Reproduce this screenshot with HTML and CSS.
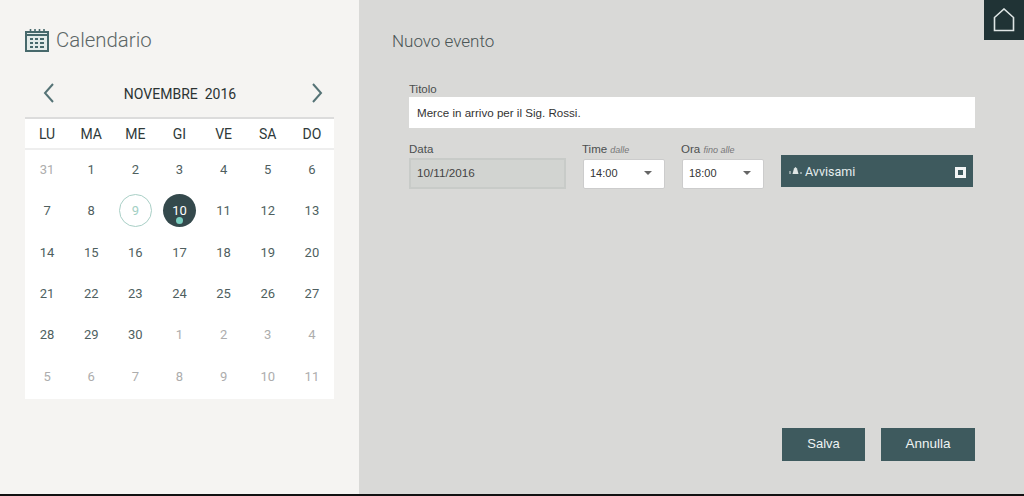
FILE: index.html

```html
<!DOCTYPE html>
<html lang="it">

<head>
    <meta charset="UTF-8">
    <title>Calendario</title>
    <link rel="stylesheet" href="styles.css">
</head>

<body>
    <div class="page">
        <div class="side">
            <div class="side-title">
                <svg class="cal-icon" width="24" height="24" viewBox="0 0 24 24">
                    <path d="M1 4H23V23H1Z" fill="#e4ecea" stroke="#47696c" stroke-width="2" />
                    <path d="M1 7H23" stroke="#47696c" stroke-width="2" />
                    <path d="M5.500 1V5M10 1V5M14.500 1V5M19 1V5" stroke="#47696c" stroke-width="1.600" />
                    <path d="M5 10H8V12H5ZM10 10H13V12H10ZM15 10H19V12H15ZM5 14H8V16H5ZM10 14H13V16H10ZM15 14H19V16H15ZM5 18H8V20H5ZM10 18H13V20H10ZM15 18H19V20H15Z" fill="#47696c" />
                </svg>
                <h1>Calendario</h1>
            </div>

            <div class="month">
                <svg width="12" height="20" viewBox="0 0 12 20">
                    <path d="M10 1L2 10L10 19" fill="none" stroke="#557376" stroke-width="2" />
                </svg>
                <span>NOVEMBRE&nbsp;&nbsp;2016</span>
                <svg width="12" height="20" viewBox="0 0 12 20">
                    <path d="M2 1L10 10L2 19" fill="none" stroke="#557376" stroke-width="2" />
                </svg>
            </div>

            <div class="cal">
                <div class="week">
                    <span>LU</span><span>MA</span><span>ME</span><span>GI</span><span>VE</span><span>SA</span><span>DO</span>
                </div>
                <div class="days">
                    <span class="off">31</span><span>1</span><span>2</span><span>3</span><span>4</span><span>5</span><span>6</span>
                    <span>7</span><span>8</span><span class="ring"><b>9</b></span><span class="now"><b>10</b></span><span>11</span><span>12</span><span>13</span>
                    <span>14</span><span>15</span><span>16</span><span>17</span><span>18</span><span>19</span><span>20</span>
                    <span>21</span><span>22</span><span>23</span><span>24</span><span>25</span><span>26</span><span>27</span>
                    <span>28</span><span>29</span><span>30</span><span class="off">1</span><span class="off">2</span><span class="off">3</span><span class="off">4</span>
                    <span class="off">5</span><span class="off">6</span><span class="off">7</span><span class="off">8</span><span class="off">9</span><span class="off">10</span><span class="off">11</span>
                </div>
            </div>
        </div>

        <div class="main">
            <a class="home">
                <svg width="22" height="24" viewBox="0 0 22 24">
                    <path d="M1.500 9.500L11 1L20.500 9.500V22.500H1.500Z" fill="none" stroke="#dfe6e5" stroke-width="1.600" />
                </svg>
            </a>

            <h2>Nuovo evento</h2>

            <div class="form">
                <label class="lab">Titolo</label>
                <div class="input-title">Merce in arrivo per il Sig. Rossi.</div>

                <div class="row">
                    <div class="col-data">
                        <label class="lab">Data</label>
                        <div class="input-data">10/11/2016</div>
                    </div>
                    <div class="col-time">
                        <label class="lab">Time <i>dalle</i></label>
                        <div class="select">14:00<em></em></div>
                    </div>
                    <div class="col-time">
                        <label class="lab">Ora <i>fino alle</i></label>
                        <div class="select">18:00<em></em></div>
                    </div>
                    <div class="alert">
                        <svg width="13" height="10" viewBox="0 0 13 10">
                            <path d="M3.500 8L5 2.500L6.500 1L8 2.500L9.500 8Z" fill="#dfe6e5" />
                            <path d="M1 5V8M12 6V8" stroke="#dfe6e5" stroke-width="1" />
                        </svg>
                        <span>Avvisami</span>
                        <u></u>
                    </div>
                </div>
            </div>

            <div class="btns">
                <button class="save">Salva</button>
                <button class="cancel">Annulla</button>
            </div>
        </div>
    </div>
    <div class="bottom"></div>
</body>

</html>
```

FILE: styles.css

```css
* {
    margin: 0;
    padding: 0;
    box-sizing: border-box;
}

body {
    width: 1024px;
    height: 496px;
    overflow: hidden;
    font-family: Roboto, sans-serif;
}

.page {
    display: flex;
    height: 494px;
}

.bottom {
    height: 2px;
    background-color: #111;
}

/* colonna calendario */
.side {
    width: 359px;
    padding: 0 25px;
    background-color: #f5f4f2;
}

.side-title {
    display: flex;
    align-items: center;
    gap: 7px;
    height: 24px;
    margin-top: 28px;
}

.side-title h1 {
    font-size: 20.400px;
    font-weight: 300;
    color: #5c6666;
}

.month {
    display: flex;
    justify-content: space-between;
    align-items: center;
    height: 24px;
    margin-top: 29px;
    padding: 0 11px 0 18px;
    font-size: 14px;
    color: #2b3333;
}

.month span {
    padding-top: 2px;
    margin-left: -1px;
    margin-right: 5px;
}

.cal {
    width: 309px;
    height: 282px;
    margin-top: 12px;
    border-top: 2px solid #dcdcdc;
    background-color: #fff;
}

.week {
    display: grid;
    grid-template-columns: repeat(7, 1fr);
    height: 31px;
    border-bottom: 2px solid #eeeeee;
    font-size: 14px;
    color: #2f3a3a;
    text-align: center;
    line-height: 30px;
}

.days {
    display: grid;
    grid-template-columns: repeat(7, 1fr);
    grid-auto-rows: 41.300px;
    margin-top: -1px;
    font-size: 13px;
    color: #4f5f5f;
}

.days span {
    display: flex;
    align-items: center;
    justify-content: center;
}

.days .off {
    color: #adadad;
}

.days b {
    font-weight: 400;
    display: flex;
    align-items: center;
    justify-content: center;
    width: 33px;
    height: 33px;
    border-radius: 50%;
    position: relative;
}

.ring b {
    border: 1px solid #a9cfc6;
    color: #a3d0c4;
}

.now b {
    background-color: #34494c;
    color: #fff;
}

.now b::after {
    content: "";
    position: absolute;
    left: 13px;
    bottom: 3px;
    width: 7px;
    height: 7px;
    border-radius: 50%;
    background-color: #79cfc0;
}

/* colonna form */
.main {
    flex: 1;
    position: relative;
    background-color: #d9d9d7;
    display: flex;
    flex-direction: column;
    padding: 31px 49px 33px 33px;
}

.home {
    position: absolute;
    top: 0;
    right: 0;
    width: 40px;
    height: 40px;
    background-color: #203335;
    display: flex;
    align-items: center;
    justify-content: center;
}

.main h2 {
    font-size: 17px;
    line-height: 20px;
    font-weight: 300;
    color: #4a5555;
}

.form {
    flex: 1;
    padding-left: 17px;
    margin-top: 32px;
    font-family: "Liberation Sans", sans-serif;
}

.lab {
    display: block;
    font-size: 11.500px;
    line-height: 13px;
    color: #4b4f4f;
}

.lab i {
    font-size: 9px;
    color: #777;
}

.input-title {
    height: 31px;
    margin-top: 1px;
    background-color: #fff;
    font-size: 11.600px;
    line-height: 31px;
    padding-left: 8px;
    color: #333;
}

.row {
    display: flex;
    align-items: flex-start;
    margin-top: 15px;
}

.col-data {
    width: 173px;
}

.input-data {
    width: 157px;
    height: 31px;
    margin-top: 2px;
    border: 2px solid #c8cbc8;
    background-color: #d2d4d1;
    font-size: 11.700px;
    line-height: 26px;
    padding-left: 6px;
    color: #444;
}

.col-time {
    width: 99px;
}

.select {
    position: relative;
    width: 82px;
    height: 30px;
    margin-top: 2px;
    margin-left: 1px;
    background-color: #fff;
    border: 1px solid #ccc;
    border-radius: 2px;
    font-size: 11px;
    line-height: 27px;
    padding-left: 6px;
    color: #333;
}

.select em {
    position: absolute;
    top: 11px;
    right: 12px;
    border-left: 4px solid transparent;
    border-right: 4px solid transparent;
    border-top: 4px solid #666;
}

.alert {
    display: flex;
    align-items: center;
    width: 192px;
    height: 32px;
    margin-top: 12px;
    margin-left: 1px;
    padding: 0 7px 0 8px;
    background-color: #3e5a5e;
    color: #e6eeee;
    font-family: Roboto, sans-serif;
    font-size: 12.500px;
}

.alert span {
    flex: 1;
    margin-left: 3px;
}

.alert u {
    width: 11px;
    height: 11px;
    margin-top: 3px;
    border: 3px solid #f2f5f5;
}

.btns {
    display: flex;
    justify-content: flex-end;
    gap: 16px;
}

.btns button {
    height: 33px;
    padding-bottom: 2px;
    border: 0;
    background-color: #3e5a5e;
    color: #eef3f3;
    font-family: "Liberation Sans", sans-serif;
}

.save {
    width: 83px;
    font-size: 13px;
}

.cancel {
    width: 94px;
    font-size: 13.500px;
}
```
